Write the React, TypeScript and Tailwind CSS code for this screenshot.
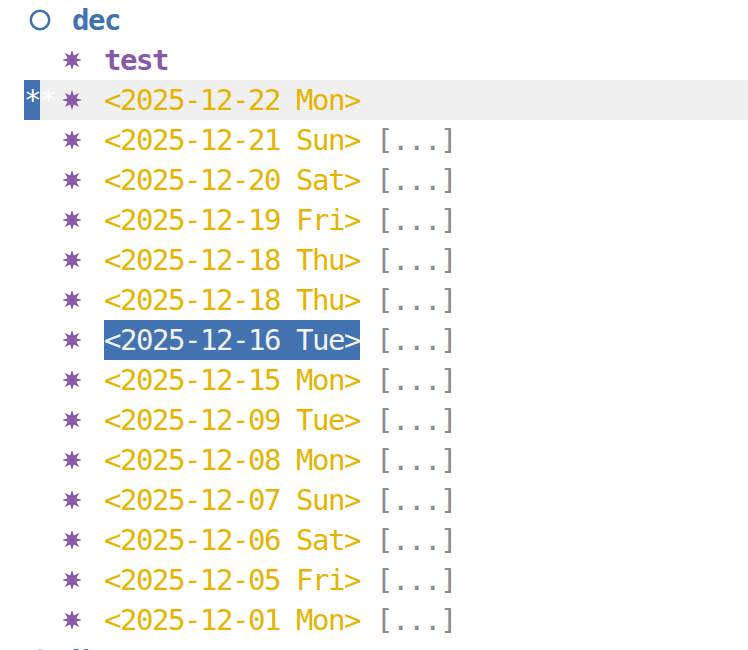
import React from "react";

const entries = [
  "2025-12-21 Sun",
  "2025-12-20 Sat",
  "2025-12-19 Fri",
  "2025-12-18 Thu",
  "2025-12-18 Thu",
  "2025-12-16 Tue",
  "2025-12-15 Mon",
  "2025-12-09 Tue",
  "2025-12-08 Mon",
  "2025-12-07 Sun",
  "2025-12-06 Sat",
  "2025-12-05 Fri",
  "2025-12-01 Mon",
];

const starPoints = Array.from({ length: 16 }, (_, i) => {
  const a = (i * Math.PI) / 8 - Math.PI / 2;
  const r = i % 2 === 0 ? 10 : 4.8;
  return `${(10 + r * Math.cos(a)).toFixed(2)},${(10 + r * Math.sin(a)).toFixed(2)}`;
}).join(" ");

function Star() {
  return (
    <svg width="20" height="20" viewBox="0 0 20 20" className="block">
      <polygon points={starPoints} fill="#8a58aa" />
    </svg>
  );
}

function Circle() {
  return (
    <svg width="22" height="22" viewBox="0 0 22 22" className="block">
      <circle cx="11" cy="11" r="9.2" fill="none" stroke="#4272b0" strokeWidth="2.5" />
    </svg>
  );
}

function Row({ children, className = "" }: { children: React.ReactNode; className?: string }) {
  return <div className={`flex h-10 items-center ${className}`}>{children}</div>;
}

function StarCell() {
  return (
    <span className="flex w-[80px] shrink-0 justify-end pr-[22px]">
      <Star />
    </span>
  );
}

function Heading({ text }: { text: string }) {
  return (
    <Row>
      <span className="flex w-[48px] shrink-0 pl-[5px]">
        <Circle />
      </span>
      <span className="font-bold text-[#4272b0]">{text}</span>
    </Row>
  );
}

export default function App() {
  return (
    <div
      className="min-h-screen overflow-hidden bg-white text-[29px] leading-10 tracking-[-1.46px]"
      style={{ fontFamily: '"DejaVu Sans Mono", "Liberation Mono", monospace' }}
    >
      <div className="pl-6">
        <Heading text="dec" />
        <Row>
          <StarCell />
          <span className="font-bold text-[#8a58aa]">test</span>
        </Row>
        <Row className="bg-[#f0f0f0]">
          <span className="flex w-[80px] shrink-0 items-center">
            <span className="flex h-10 w-4 items-center justify-center bg-[#4272b0] text-white">*</span>
            <span className="flex h-10 w-4 items-center justify-center text-[#fdfdfd]">*</span>
            <span className="ml-[6px]">
              <Star />
            </span>
          </span>
          <span className="text-[#e6b300]">&lt;2025-12-22 Mon&gt;</span>
        </Row>
        {entries.map((d, i) => (
          <Row key={i}>
            <StarCell />
            {d === "2025-12-16 Tue" ? (
              <span className="bg-[#4272b0] text-[#f2f2f2]">&lt;{d}&gt;</span>
            ) : (
              <span className="text-[#e6b300]">&lt;{d}&gt;</span>
            )}
            <span className="ml-4 text-[#8c8c8c]">[...]</span>
          </Row>
        ))}
        <Heading text="Nov" />
      </div>
    </div>
  );
}
